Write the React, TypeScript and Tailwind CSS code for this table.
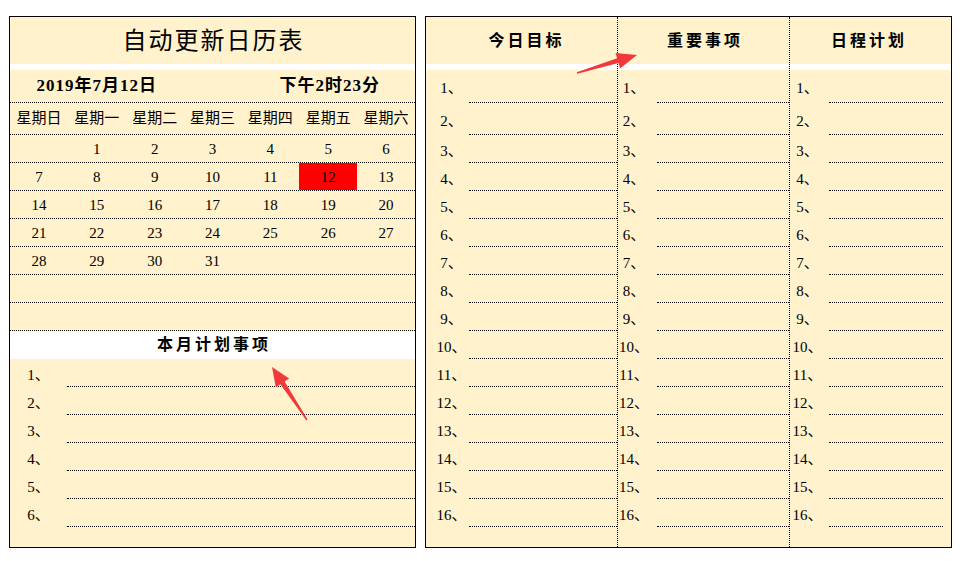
import React from "react";

const weekDays = ["星期日", "星期一", "星期二", "星期三", "星期四", "星期五", "星期六"];
const calRows: (number | null)[][] = [
  [null, 1, 2, 3, 4, 5, 6],
  [7, 8, 9, 10, 11, 12, 13],
  [14, 15, 16, 17, 18, 19, 20],
  [21, 22, 23, 24, 25, 26, 27],
  [28, 29, 30, 31, null, null, null],
  [null, null, null, null, null, null, null],
  [null, null, null, null, null, null, null],
];
const nums16 = Array.from({ length: 16 }, (_, i) => i + 1);

function rowHeight(i: number) {
  if (i === 0) return "h-[33px]";
  if (i === 1) return "h-[32px]";
  return "h-[28px]";
}

function LeftPanel() {
  return (
    <div className="w-[407px] h-[532px] border border-black bg-[#fff2cc] flex flex-col">
      <div className="h-[47px] flex items-center justify-center text-[24px] tracking-[2px] pl-[2px]">
        自动更新日历表
      </div>
      <div className="h-[6px] bg-white" />
      <div className="h-[33px] border-b border-dotted border-black grid grid-cols-7 items-center font-bold text-[17px] tracking-[1px]">
        <div className="col-span-3 text-center">2019年7月12日</div>
        <div className="col-start-5 col-span-3 text-center pl-[3px]">下午2时23分</div>
      </div>
      <div className="h-[32px] border-b border-dotted border-black grid grid-cols-7 items-center text-[15px]">
        {weekDays.map((d) => (
          <div key={d} className="text-center">
            {d}
          </div>
        ))}
      </div>
      {calRows.map((r, ri) => (
        <div key={ri} className="h-[28px] border-b border-dotted border-black grid grid-cols-7 text-[15px]">
          {r.map((n, ci) => (
            <div
              key={ci}
              className={
                "flex items-center justify-center pt-[2px] " + (n === 12 ? "bg-[#ff0000]" : "")
              }
            >
              {n ?? ""}
            </div>
          ))}
        </div>
      ))}
      <div className="h-[28px] bg-white flex items-center justify-center font-bold text-[16px] tracking-[3px] pl-[3px]">
        本月计划事项
      </div>
      {[1, 2, 3, 4, 5, 6].map((n) => (
        <div key={n} className="h-[28px] flex">
          <div className="w-[57px] flex items-center justify-center pt-[4px] text-[15px]">{n}、</div>
          <div className="flex-1 border-b border-dotted border-black" />
        </div>
      ))}
      <div className="flex-1" />
    </div>
  );
}

function Column({
  title,
  className,
  headerClass,
  labelClass,
  lineClass,
}: {
  title: string;
  className: string;
  headerClass: string;
  labelClass: string;
  lineClass: string;
}) {
  return (
    <div className={"flex flex-col " + className}>
      <div
        className={
          "h-[47px] flex items-center justify-center font-bold text-[16px] tracking-[3px] " + headerClass
        }
      >
        {title}
      </div>
      <div className="h-[6px] bg-white" />
      {nums16.map((n, i) => (
        <div key={n} className={"flex " + rowHeight(i)}>
          <div className={"flex items-center justify-center pt-[4px] text-[15px] " + labelClass}>
            {n}、
          </div>
          <div className={"flex-1 border-b border-dotted border-black " + lineClass} />
        </div>
      ))}
      <div className="flex-1" />
    </div>
  );
}

function RightPanel() {
  return (
    <div className="w-[527px] h-[532px] border border-black bg-[#fff2cc] flex">
      <Column
        title="今日目标"
        className="w-[192px] border-r border-dotted border-black"
        headerClass="pl-[10px]"
        labelClass="ml-[8px] w-[35px]"
        lineClass=""
      />
      <Column
        title="重要事项"
        className="w-[172px] border-r border-dotted border-black"
        headerClass="pl-[3px]"
        labelClass="w-[32px]"
        lineClass="ml-[7px]"
      />
      <Column
        title="日程计划"
        className="flex-1"
        headerClass="pr-[3px]"
        labelClass="w-[35px]"
        lineClass="ml-[4px] mr-[8px]"
      />
    </div>
  );
}

export default function App() {
  return (
    <div className="relative w-[971px] h-[561px] bg-white text-black font-['Liberation_Serif','Noto_Sans_CJK_SC',serif]">
      <div className="flex gap-[9px] pl-[9px] pt-[16px]">
        <LeftPanel />
        <RightPanel />
      </div>
      <svg className="absolute inset-0 pointer-events-none" width="971" height="561" viewBox="0 0 971 561">
        <polygon
          fill="#f03a3a"
          points="576.8,72.3 617.1,58.3 615.5,53.0 637,55 620.1,68.4 618.5,63.1 577.2,73.7"
        />
        <polygon
          fill="#f03a3a"
          points="307.6,419.6 284.6,381.4 289.2,378.4 272,367 275.8,387.2 280.4,384.2 306.4,420.4"
        />
      </svg>
    </div>
  );
}
